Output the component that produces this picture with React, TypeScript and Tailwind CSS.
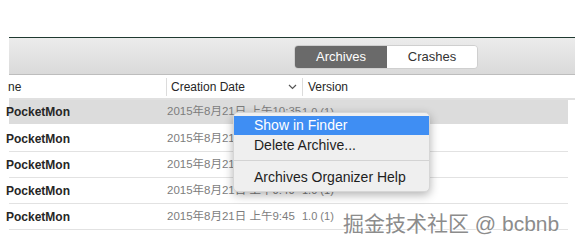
import React from 'react';

const rows = [
  { name: 'PocketMon', date: '2015年8月21日 上午10:35', version: '1.0 (1)', selected: true },
  { name: 'PocketMon', date: '2015年8月21日 上午10:12', version: '1.0 (1)' },
  { name: 'PocketMon', date: '2015年8月21日 上午10:01', version: '1.0 (1)' },
  { name: 'PocketMon', date: '2015年8月21日 上午9:49', version: '1.0 (1)' },
  { name: 'PocketMon', date: '2015年8月21日 上午9:45', version: '1.0 (1)' },
];

const font = { fontFamily: '"Liberation Sans", "Noto Sans CJK SC", sans-serif' };

const ChevronDown: React.FC = () => (
  <svg width="9" height="6" viewBox="0 0 9 6" fill="none" stroke="#555" strokeWidth={1.2}>
    <path d="M1 1l3.5 3.5L8 1" />
  </svg>
);

const ContextMenu: React.FC = () => (
  <div className="absolute left-[233px] top-[112px] w-[197px] rounded-[5px] bg-[#efefef] py-[3px] shadow-[0_3px_10px_rgba(0,0,0,0.3)] border border-[#d6d6d6] text-[14px] text-[#1e1e1e] whitespace-nowrap">
    <div className="h-[19px] leading-[19px] bg-[#3f8ef3] pl-[20px] text-white">Show in Finder</div>
    <div className="h-[20px] leading-[20px] pl-[20px]">Delete Archive...</div>
    <div className="my-[5px] h-px bg-[#d3d3d3]" />
    <div className="h-[22px] leading-[22px] pl-[20px]">Archives Organizer Help</div>
  </div>
);

export default function App() {
  return (
    <div className="relative w-[575px] h-[250px] bg-white overflow-hidden" style={font}>
      <div className="h-[37px]" />
      <div className="ml-[9px]">
        <div className="h-px bg-[#1f3a30]" />
        <div className="h-[37px] flex items-center pl-[285px] bg-gradient-to-b from-[#ececec] to-[#dadada] border-b border-[#bdbdbd]">
          <div className="flex h-[24px] w-[184px] mt-[2px] rounded-[4px] overflow-hidden border border-[#cfcfcf] text-[13px]">
            <div className="w-[92px] flex items-center justify-center bg-[#6a6a6a] text-white">Archives</div>
            <div className="flex-1 flex items-center justify-center bg-white text-[#333]">Crashes</div>
          </div>
        </div>
        <div className="h-[25px] flex items-center text-[12px] text-[#262626] border-b-[2px] border-[#e0e0e0] whitespace-nowrap">
          <div className="w-[158px] -ml-[1px]">ne</div>
          <div className="w-px h-[18px] bg-[#dcdcdc]" />
          <div className="w-[135px] flex items-center pl-[4px] pr-[5px] justify-between">
            <span>Creation Date</span>
            <ChevronDown />
          </div>
          <div className="w-px h-[18px] bg-[#dcdcdc]" />
          <div className="pl-[5px]">Version</div>
        </div>
        <div className="w-[559px]">
          {rows.map((r, i) => (
            <div
              key={i}
              className={`h-[26px] flex items-center whitespace-nowrap ${r.selected ? 'bg-[#dcdcdc] border-b-[2px] border-white' : 'border-b border-[#e2e2e2]'}`}
            >
              <div className="w-[159px] shrink-0 -ml-[3px] text-[12px] font-bold text-[#262626]">{r.name}</div>
              <div className="w-[137px] shrink-0 pl-[2px] text-[11.5px] text-[#7d7d7d]">{r.date}</div>
              <div className="text-[11px] text-[#7d7d7d]">{r.version}</div>
            </div>
          ))}
        </div>
      </div>
      <ContextMenu />
      <div
        className="absolute left-[343px] top-[208px] text-[21px] text-[#8c8c8c] whitespace-nowrap"
        style={{ ...font, textShadow: '0 0 2px #fff, 0 0 2px #fff, 0 0 2px #fff' }}
      >
        掘金技术社区 @ bcbnb
      </div>
    </div>
  );
}
